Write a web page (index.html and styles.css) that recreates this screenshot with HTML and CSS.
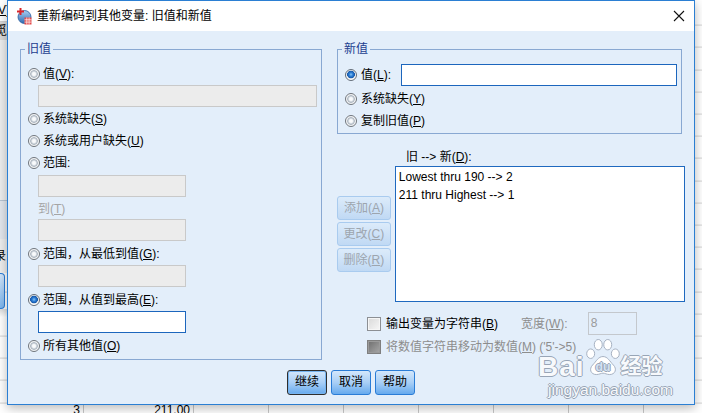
FILE: index.html
```html
<!DOCTYPE html>
<html lang="zh-CN">
<head>
  <meta charset="UTF-8">
  <title>重新编码到其他变量: 旧值和新值</title>
  <link rel="stylesheet" href="styles.css">
</head>
<body>
  <!-- 后面的数据视图 -->
  <div class="sheet">
    <div class="side">
      <div class="side-menu"><span><u>V</u>)</span></div>
      <div class="side-tool"><span>觅</span></div>
      <div class="side-panel"></div>
      <div class="side-panel2"></div>
      <div class="side-text"><span>录</span></div>
      <div class="side-btn"></div>
      <div class="side-shadow"></div>
    </div>
    <div class="data-row">
      <div class="cell c-num">3</div>
      <div class="cell c-val">211.00</div>
      <div class="cell"></div>
      <div class="cell"></div>
      <div class="cell"></div>
      <div class="cell"></div>
      <div class="cell"></div>
      <div class="cell"></div>
    </div>
  </div>

  <div class="dialog">
    <div class="titlebar">
      <svg class="app-icon" viewBox="0 0 16 18">
        <defs>
          <linearGradient id="globe" x1="0" y1="0" x2="0" y2="1">
            <stop offset="0" stop-color="#a9d0f2"/>
            <stop offset="1" stop-color="#2c68b0"/>
          </linearGradient>
        </defs>
        <circle cx="8.5" cy="10" r="6.5" fill="url(#globe)" stroke="#2a5d9e" stroke-width="0.8"/>
        <path d="M1 4.5h7M4.5 1v7" stroke="#d9262b" stroke-width="2"/>
        <rect x="8.5" y="10.5" width="7" height="7" fill="#e34a4a"/>
        <path d="M8.5 12.8h7M8.5 15.1h7M10.8 10.5v7M13.1 10.5v7" stroke="#fff" stroke-width="0.7"/>
      </svg>
      <span class="title">重新编码到其他变量: 旧值和新值</span>
      <svg class="close" viewBox="0 0 12 12">
        <path d="M1 1L11 11M11 1L1 11" stroke="#111" stroke-width="1.1" fill="none"/>
      </svg>
    </div>

    <div class="body">
      <div class="columns">
        <fieldset class="group old">
          <legend>旧值</legend>
          <div class="opt"><span class="radio"></span><span>值(<u>V</u>):</span></div>
          <div class="field wide"></div>
          <div class="opt mt1"><span class="radio"></span><span>系统缺失(<u>S</u>)</span></div>
          <div class="opt"><span class="radio"></span><span>系统或用户缺失(<u>U</u>)</span></div>
          <div class="opt"><span class="radio"></span><span>范围:</span></div>
          <div class="field short mt1"></div>
          <div class="sub-label">到(<u>T</u>)</div>
          <div class="field short"></div>
          <div class="opt mt2"><span class="radio"></span><span>范围，从最低到值(<u>G</u>):</span></div>
          <div class="field short"></div>
          <div class="opt mt2"><span class="radio on"></span><span>范围，从值到最高(<u>E</u>):</span></div>
          <div class="field short active"></div>
          <div class="opt mt2"><span class="radio"></span><span>所有其他值(<u>O</u>)</span></div>
        </fieldset>

        <div class="right">
          <fieldset class="group new">
            <legend>新值</legend>
            <div class="opt tall"><span class="radio on"></span><span>值(<u>L</u>):</span><div class="field grow active"></div></div>
            <div class="opt mt1"><span class="radio"></span><span>系统缺失(<u>Y</u>)</span></div>
            <div class="opt short-row"><span class="radio"></span><span>复制旧值(<u>P</u>)</span></div>
          </fieldset>

          <div class="list-label">旧 --&gt; 新(<u>D</u>):</div>
          <div class="list-area">
            <div class="side-buttons">
              <div class="sbtn">添加(<u>A</u>)</div>
              <div class="sbtn">更改(<u>C</u>)</div>
              <div class="sbtn">删除(<u>R</u>)</div>
            </div>
            <div class="listbox">
              <div class="item">Lowest thru 190 --&gt; 2</div>
              <div class="item">211 thru Highest --&gt; 1</div>
            </div>
          </div>

          <div class="check-row first">
            <span class="check"></span>
            <span class="check-text">输出变量为字符串(<u>B</u>)</span>
            <span class="muted">宽度(<u>W</u>):</span>
            <div class="field tiny">8</div>
          </div>
          <div class="check-row">
            <span class="check off"></span>
            <span class="muted">将数值字符串移动为数值(<u>M</u>) ('5'-&gt;5)</span>
          </div>
        </div>
      </div>

      <div class="footer">
        <div class="btn default">继续</div>
        <div class="btn">取消</div>
        <div class="btn">帮助</div>
      </div>
    </div>

    <div class="watermark">
      <div class="wm-top">
        <span class="wm-bai">Bai</span>
        <svg class="wm-paw" viewBox="0 0 38 40">
          <g fill="#fff" stroke="#a2aebe" stroke-width="1">
            <ellipse cx="6" cy="16" rx="4.2" ry="5"/>
            <ellipse cx="14" cy="6.5" rx="4.2" ry="5.5"/>
            <ellipse cx="24" cy="6.5" rx="4.2" ry="5.5"/>
            <ellipse cx="32" cy="16" rx="4.2" ry="5"/>
            <path d="M19 19c-5 0-7 5-11 9-4 4-2 10 4 10 3 0 5-1.5 7-1.5s4 1.5 7 1.5c6 0 8-6 4-10-4-4-6-9-11-9z"/>
          </g>
          <text x="19" y="34" text-anchor="middle" class="wm-du">du</text>
        </svg>
        <span class="wm-jy">经验</span>
      </div>
      <div class="wm-url">jingyan.baidu.com</div>
    </div>
  </div>
</body>
</html>
```

FILE: styles.css
```css
/* Estilos base */
* {
  box-sizing: border-box;
}
body {
  margin: 0;
  width: 702px;
  height: 413px;
  overflow: hidden;
  position: relative;
  background: #fff;
  color: #000;
  font-family: "Liberation Sans", "Noto Sans CJK SC", sans-serif;
  font-size: 12px;
  line-height: 16px;
}
u {
  text-underline-offset: 1px;
}

/* Hoja de datos detrás del diálogo */
.sheet {
  height: 413px;
  display: flex;
  flex-direction: column;
  background-image: repeating-linear-gradient(to bottom, transparent 0, transparent 21.2px, #d3d3d3 21.2px, #d3d3d3 22.2px);
  background-position: 0 3.6px;
}
.side {
  width: 7px;
  overflow: hidden;
  white-space: nowrap;
  display: flex;
  flex-direction: column;
}
.side-menu {
  height: 22px;
  background: #fff;
  border-bottom: 1px solid #cfcfcf;
  line-height: 20px;
}
.side-menu span {
  margin-left: -2px;
}
.side-tool {
  height: 18px;
  background: #d8d8d8;
  line-height: 18px;
}
.side-tool span {
  margin-left: -5px;
}
.side-panel {
  height: 161px;
  background: #eeeeee;
  border-bottom: 1px solid #b8c4d2;
}
.side-panel2 {
  height: 38px;
  background: #e3e7ed;
}
.side-text {
  height: 34px;
  background: #eeeeee;
  line-height: 34px;
}
.side-text span {
  margin-left: -6px;
}
.side-btn {
  width: 5px;
  height: 36px;
  border: 1px solid #2a7cd6;
  border-left: none;
  border-radius: 0 4px 4px 0;
  background: linear-gradient(#d2e6fb, #7db6ee);
}
.side-shadow {
  height: 8px;
  background: linear-gradient(#dcdcdc, #fff);
}
.data-row {
  margin-top: auto;
  height: 11px;
  display: flex;
}
.cell {
  width: 75px;
  height: 11px;
  border-right: 1px solid #c8c8c8;
  text-align: right;
  padding-right: 3px;
  line-height: 16px;
}
.c-num {
  width: 84px;
}
.c-val {
  width: 110px;
}

/* Diálogo */
.dialog {
  position: absolute;
  left: 7px;
  top: 0;
  width: 688px;
  height: 405px;
  border: 1px solid #2b7fd3;
  background: #e3eefa;
  box-shadow: 0 3px 10px rgba(0, 0, 0, 0.28);
}
.titlebar {
  height: 30px;
  background: #fff;
  display: flex;
  align-items: center;
  padding-left: 8px;
}
.app-icon {
  width: 16px;
  height: 18px;
  margin-right: 5px;
}
.close {
  width: 12px;
  height: 12px;
  margin-left: auto;
  margin-right: 9px;
}
.body {
  padding: 10px 9px 0 12px;
}
.columns {
  display: flex;
  gap: 15px;
  align-items: flex-start;
}

/* Grupos */
.group {
  margin: 0;
  min-width: 0;
  border: 1px solid #89a8d2;
  padding: 6px 4px 2px 7px;
}
.group legend {
  padding: 0 2px;
  margin-left: -3px;
  line-height: 16px;
  color: #233e8f;
}
.old {
  width: 302px;
}
.right {
  width: 348px;
}
.new {
  width: 345px;
}
.opt {
  display: flex;
  align-items: center;
  height: 22px;
  gap: 3px;
}
.opt.tall {
  height: 24px;
}
.opt.short-row {
  height: 21px;
}
.new .opt {
  gap: 4px;
}
.mt1 {
  margin-top: 1px;
}
.mt2 {
  margin-top: 2px;
}
.radio {
  width: 12px;
  height: 12px;
  flex: none;
  border-radius: 50%;
  border: 1px solid #6f757c;
  background: radial-gradient(circle, #ffffff 0, #f1f4f7 1.8px, #a7b1bc 3.4px, #e6e9ec 4px, #ffffff 5px);
}
.radio.on {
  border-color: #646d78;
  background: radial-gradient(circle at 50% 45%, #86c6f6 0, #2f7fd6 1.8px, #1456a8 3.6px, #e6e9ec 4.1px, #ffffff 5px);
}
.field {
  height: 22px;
  border: 1px solid #c9c9c9;
  background: #ececec;
  margin-left: 10px;
}
.field.short {
  width: 148px;
}
.field.active {
  background: #fff;
  border-color: #1c66bd;
}
.field.grow {
  flex: 1;
  margin-left: 6px;
}
.sub-label {
  height: 22px;
  padding: 2px 0 0 10px;
  line-height: 20px;
  color: #a5a5a5;
}

/* Lista */
.list-label {
  margin-top: 15px;
  padding-left: 69px;
  line-height: 16px;
}
.list-area {
  margin-top: 1px;
  display: flex;
  align-items: center;
  gap: 4px;
}
.side-buttons {
  width: 54px;
  display: flex;
  flex-direction: column;
  gap: 2px;
}
.sbtn {
  height: 24px;
  border: 1px solid #a9cbef;
  border-radius: 3px;
  background: linear-gradient(#dcebfa, #c0d9f4);
  color: #9da5ae;
  text-align: center;
  line-height: 22px;
}
.listbox {
  width: 291px;
  height: 136px;
  border: 1px solid #1f69bf;
  background: #fff;
  padding: 1px 3px;
}
.item {
  line-height: 18px;
}

/* Casillas */
.check-row {
  height: 22px;
  margin-top: 1px;
  padding-left: 30px;
  display: flex;
  align-items: center;
}
.check-row.first {
  height: 23px;
  margin-top: 10px;
}
.check {
  width: 14px;
  height: 14px;
  flex: none;
  margin-right: 5px;
  border: 1px solid #8c8f94;
  box-shadow: inset 0 0 0 1px #f6f6f6;
  background: linear-gradient(135deg, #d9d9d9, #f7f7f7);
}
.check.off {
  border-color: #7f7f7f;
  box-shadow: inset 0 0 0 1px #9a9a9a;
  background: linear-gradient(135deg, #6e6e6e, #a8a8a8);
}
.check-text {
  width: 135px;
}
.muted {
  color: #8d8d8d;
}
.field.tiny {
  width: 49px;
  height: 23px;
  margin-left: 20px;
  padding-left: 2px;
  line-height: 21px;
  color: #9a9a9a;
  background: #e3eefa;
  border-color: #c4c8cd;
}

/* Botones */
.footer {
  margin-top: 10px;
  padding-right: 3px;
  display: flex;
  justify-content: center;
  gap: 4px;
}
.btn {
  width: 40px;
  height: 25px;
  border: 1px solid #2a7cd6;
  border-radius: 3px;
  background: linear-gradient(#d3e7fb, #a9cff6 50%, #66aaee);
  text-align: center;
  line-height: 23px;
}
.btn.default {
  border-color: #2e2e2e;
  box-shadow: inset 0 0 0 1px #76b4f0;
}

/* Marca de agua */
.watermark {
  position: absolute;
  z-index: 2;
  left: 530px;
  top: 336px;
  color: #f7f9fc;
  text-shadow: 1px 0 0 #98a5b6, -1px 0 0 #98a5b6, 0 1px 0 #98a5b6, 0 -1px 0 #98a5b6;
  pointer-events: none;
}
.wm-top {
  display: flex;
  align-items: flex-end;
  height: 40px;
}
.wm-bai {
  display: block;
  flex: none;
  font-family: "Liberation Sans", sans-serif;
  font-size: 28px;
  font-weight: bold;
  line-height: 28px;
  letter-spacing: 1px;
  margin-bottom: -4px;
}
.wm-paw {
  width: 36px;
  height: 39px;
}
.wm-du {
  font-family: "Liberation Sans", sans-serif;
  font-size: 13px;
  font-weight: bold;
  fill: #d2e1f3;
}
.wm-jy {
  font-size: 21px;
  font-weight: bold;
  line-height: 24px;
  margin-bottom: -1px;
}
.wm-url {
  margin-top: 5px;
  margin-left: 10px;
  font-size: 15.5px;
  line-height: 16px;
}
```
